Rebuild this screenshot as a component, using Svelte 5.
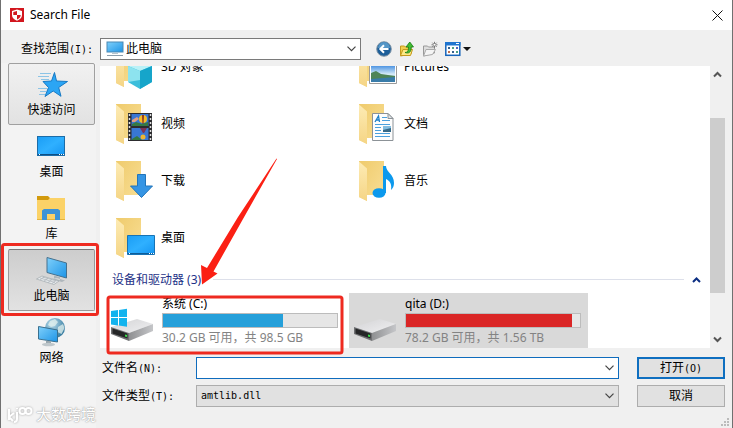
<script>
let fileName = "";
let lookIn = "此电脑";
let fileType = "amtlib.dll";
let active = "pc";

const places = [
    { id: "quick", label: "快速访问" },
    { id: "desktop", label: "桌面" },
    { id: "library", label: "库" },
    { id: "pc", label: "此电脑" },
    { id: "network", label: "网络" }
];

const folders = [
    { id: "objects", label: "3D 对象" },
    { id: "pictures", label: "Pictures" },
    { id: "videos", label: "视频" },
    { id: "documents", label: "文档" },
    { id: "downloads", label: "下载" },
    { id: "music", label: "音乐" },
    { id: "desktop", label: "桌面" }
];

const drives = [
    { label: "系统 (C:)", info: "30.2 GB 可用，共 98.5 GB", used: 69, system: true },
    { label: "qita (D:)", info: "78.2 GB 可用，共 1.56 TB", used: 95.5, full: true, selected: true }
];
</script>

<div class="dialog">
    <svg class="defs" width="0" height="0" aria-hidden="true">
        <defs>
            <linearGradient id="screen" x1="0" y1="0" x2="1" y2="1">
                <stop offset="0" stop-color="#1a9df5" /><stop offset=".5" stop-color="#2fb0ff" /><stop offset="1" stop-color="#1595f2" />
            </linearGradient>
            <linearGradient id="glass" x1="0" y1="0" x2="1" y2="1">
                <stop offset="0" stop-color="#7fd0fb" /><stop offset="1" stop-color="#1d94e6" />
            </linearGradient>
            <linearGradient id="back" x1="0" y1="0" x2="1" y2="1">
                <stop offset="0" stop-color="#efcb6c" /><stop offset="1" stop-color="#f9df97" />
            </linearGradient>
            <linearGradient id="flap" x1="0" y1="0" x2="0" y2="1">
                <stop offset="0" stop-color="#fdebb4" /><stop offset="1" stop-color="#f5d585" />
            </linearGradient>
            <linearGradient id="metal" x1="0" y1="0" x2="1" y2="1">
                <stop offset="0" stop-color="#d3d3d5" /><stop offset="1" stop-color="#f0f0f2" />
            </linearGradient>
            <linearGradient id="side" x1="0" y1="0" x2="1" y2="0">
                <stop offset="0" stop-color="#8f9092" /><stop offset="1" stop-color="#c5c6c9" />
            </linearGradient>
            <linearGradient id="sky" x1="0" y1="0" x2="0" y2="1">
                <stop offset="0" stop-color="#3f8be0" /><stop offset=".55" stop-color="#d8ecf8" /><stop offset="1" stop-color="#5b9fc4" />
            </linearGradient>
            <radialGradient id="globe" cx=".35" cy=".3" r=".8">
                <stop offset="0" stop-color="#b8dcec" /><stop offset="1" stop-color="#2a7399" />
            </radialGradient>
        </defs>
    </svg>

    <header class="titlebar">
        <svg width="14" height="14" viewBox="0 0 14 14">
            <rect width="14" height="14" fill="#d2161e" />
            <path d="M7 1.6 12 3v4c0 2.8-2.2 4.7-5 5.8C4.200 11.700 2 9.800 2 7V3Z" fill="#fff" />
            <path d="M7 3v4H3.300V4Z M7 7h3.700c0 2-1.600 3.500-3.700 4.500Z" fill="#d2161e" />
        </svg>
        <h1>Search File</h1>
        <button class="close" aria-label="关闭">
            <svg width="11" height="11" viewBox="0 0 11 11"><path d="M.5.5l10 10M10.500.5l-10 10" stroke="#111" fill="none" /></svg>
        </button>
    </header>

    <div class="lookup">
        <label for="look-in">查找范围<span class="mono">(I):</span></label>
        <div class="combo location">
            <svg width="18" height="16" viewBox="0 0 18 16">
                <rect x="1" y="1" width="16" height="10" fill="url(#glass)" stroke="#4a89b5" />
                <path d="M6 12h6v1H6z" fill="#b8c4cc" />
                <path d="M1 14.500h16" stroke="#8b9dab" />
            </svg>
            <select id="look-in" bind:value={lookIn}><option>此电脑</option></select>
            <svg class="chevron" width="9" height="6" viewBox="0 0 9 6"><path d="M.5.7l4 4 4-4" fill="none" stroke="#444" stroke-width="1.200" /></svg>
        </div>
        <div class="tools">
            <button aria-label="后退">
                <svg width="16" height="16" viewBox="0 0 16 16">
                    <circle cx="8" cy="8" r="7.300" fill="#1c5e99" stroke="#8397a8" />
                    <path d="M2 7a6 6 0 0 1 12 0Z" fill="#5596c6" />
                    <path d="M12.500 8H4.500M8 4.300 4.300 8 8 11.700" fill="none" stroke="#fff" stroke-width="2" />
                </svg>
            </button>
            <button aria-label="向上一级">
                <svg width="16" height="16" viewBox="0 0 16 16">
                    <path d="M1.500 5h4l1 1h5.500v7l-10.500 2Z" fill="#f2ce4e" stroke="#c59a1d" />
                    <path d="M4 8.500h9.500l-2 6h-10Z" fill="#fde986" stroke="#c59a1d" />
                    <path d="M6 11.500c3 0 3.500-2 3.500-5.500H7L10.800 1 14.500 6h-2.300c0 5-2 7-6.200 5.500Z" fill="#42bd32" stroke="#197b16" stroke-width=".8" />
                </svg>
            </button>
            <button aria-label="新建文件夹">
                <svg width="16" height="16" viewBox="0 0 16 16">
                    <path d="M1.500 5h4l1 1h6v6l-11 3Z" fill="#ddd" stroke="#999" />
                    <path d="M4 8.500h9.500l-3 5-9 1.500Z" fill="#f4f4f4" stroke="#aaa" />
                    <path d="M12.500.8v6M9.500 3.800h6M10.400 1.700l4.200 4.200M14.600 1.700l-4.200 4.200" stroke="#777" />
                    <circle cx="12.500" cy="3.800" r="1" fill="#fff" />
                </svg>
            </button>
            <button class="view" aria-label="查看">
                <svg width="26" height="16" viewBox="0 0 26 16">
                    <rect x=".8" y="1.800" width="14" height="12.500" fill="#fff" stroke="#1765bb" stroke-width="1.500" />
                    <path d="M0 1h15.500v3.500H0z" fill="#1f74cf" />
                    <path d="M11 2.500h3" stroke="#fff" />
                    <path d="M3 7h2M7 11h2" stroke="#35618e" stroke-width="2" />
                    <path d="M7 7h2M11 11h2" stroke="#4ea082" stroke-width="2" />
                    <path d="M11 7h2" stroke="#5164c0" stroke-width="2" />
                    <path d="M3 11h2" stroke="#c1704e" stroke-width="2" />
                    <path d="M18 6h8l-4 4Z" fill="#111" />
                </svg>
            </button>
        </div>
    </div>

    <div class="body">
        <nav class="places">
            {#each places as place}
                <button class="place" class:hover={place.id === "quick"} class:active={place.id === active} on:click={() => (active = place.id)}>
                    <svg width="32" height="32" viewBox="0 0 32 32">
                        {#if place.id === "quick"}
                            <path d="M18.500 2.500 20.500 11l11 .5-8.800 6 2.300 8.800-7.800-5.300-8.200 5.500 3.500-9L7 11.500l8.500-.5Z" fill="#2ba5f4" stroke="#1679c4" />
                            <path d="M4 3.500h11M2 6.500h11M5 9.500h8M2 18.500h9M4 21.500h6M3 24.500h6" stroke="#8cc4e6" />
                        {:else if place.id === "desktop"}
                            <rect x="1.500" y="4.500" width="27" height="19" fill="url(#screen)" stroke="#1b6ca8" />
                            <path d="M2 22.500h26" stroke="#0d4f85" /><path d="M3 22.500h1M23 22.500h1M25 22.500h1M27 22.500h1" stroke="#fff" />
                        {:else if place.id === "library"}
                            <path d="M1 2h11l2 2-1 3H1Z" fill="#d29a0d" />
                            <path d="M1 6h11l2-2h15v22H1Z" fill="#fbd267" />
                            <path d="M6 26V16.500l2-1.500h14l2 1.500V26h-5v-6h-8v6Z" fill="#3d93d6" />
                            <path d="M1 25.500h5M11 25.500h8M24 25.500h5" stroke="#e5b43c" />
                        {:else if place.id === "pc"}
                            <path d="M11 1.500 30.500 7v15L11 16.500Z" fill="url(#glass)" stroke="#45718e" />
                            <path d="M18 19.500l6 1.700v3l-6-1.500ZM15 23l11 3 3-1.500-8-2.500Z" fill="#aeb6bb" />
                            <path d="M6 20 23 25l-5 3.500L.5 23Z" fill="#e8ebed" stroke="#a2aaaf" stroke-width=".7" />
                            <path d="M4 22l15 4.500M6.500 21l14 4M8 21l-4 3M12 22.500 8 25M16 23.500l-4 3M20 24.500l-4 3" stroke="#aab2b7" stroke-width=".7" />
                        {:else}
                            <circle cx="19" cy="10" r="10" fill="url(#globe)" />
                            <path d="M14 3l5-2 3 3-3 4-4 1-3-2ZM22 9l5-3 1.500 4-3 6-4-2Z" fill="#e4f1ee" opacity=".75" />
                            <path d="M2.500 8.500 21.500 12v12L2.500 21Z" fill="url(#glass)" stroke="#39708f" />
                            <path d="M10 22.500l5 .8V26h-5Z" fill="#97a5ad" />
                            <ellipse cx="12.500" cy="26.500" rx="6.500" ry="1.800" fill="#bfc7cb" />
                        {/if}
                    </svg>
                    <span>{place.label}</span>
                </button>
            {/each}
        </nav>

        <main>
            <div class="browser">
                <div class="list">
                    <ul class="folders">
                        {#each folders as folder}
                            <li>
                                <svg width="48" height="48" viewBox="0 0 48 48">
                                    <path d="M7 4h25v34H15v6L7 40Z" fill="url(#back)" />
                                    <path d="M7 4.500l8 7V44l-8-4Z" fill="url(#flap)" />
                                    {#if folder.id === "objects"}
                                        <path d="M31 18 43 23v16l-12 7-12-7V23Z" fill="#3cbedb" />
                                        <path d="M31 18 43 23l-12 5-12-5Z" fill="#b9f1f7" />
                                        <path d="M31 28 43 23v16l-12 7Z" fill="#16a5ca" />
                                        <path d="M19 23l12 5v9l-12 2Z" fill="#8de3ef" />
                                    {:else if folder.id === "pictures"}
                                        <path d="M17.500 20.500h27v20h-27z" fill="#fff" stroke="#9a9a9a" />
                                        <path d="M19 22h24v17H19z" fill="url(#sky)" />
                                        <path d="M19 30l5-2 5 3 14 2v2l-24 2Z" fill="#4e8457" />
                                        <path d="M19 36l24-2v5H19Z" fill="#397ca9" />
                                    {:else if folder.id === "videos"}
                                        <path d="M19 13h24v28H19z" fill="#2c2c2e" />
                                        <path d="M22.500 14h17v12h-17zM22.500 28h17v12h-17z" fill="#3877d4" />
                                        <path d="M20.500 14v27M41.500 14v27" stroke="#dedede" stroke-width="1.500" stroke-dasharray="2 2" />
                                        <circle cx="34" cy="19" r="4" fill="#f3bd29" /><path d="M33 15h2l-.5 10h-1Z" fill="#913520" />
                                        <path d="M23 24l4-2 6 2 6-2v4H23ZM23 39l5-3 5 4H23Z" fill="#347943" />
                                        <path d="M31 28h7l-3 5h-1Z" fill="#7c3355" /><circle cx="34" cy="37" r="2.500" fill="#eeb630" />
                                        <path d="M23 20l5-3 2 2-4 3h-3Z" fill="#dfa084" />
                                    {:else if folder.id === "documents"}
                                        <path d="M20.500 13.500H36l5 5v22H20.500Z" fill="#fdfdfd" stroke="#8c9297" />
                                        <path d="M36 13.500v5h5Z" fill="#dfe3e6" stroke="#8c9297" />
                                        <path d="M23 22l3.500-6 1 6M24.500 20h3" fill="none" stroke="#1c7fc9" stroke-width="1.300" />
                                        <path d="M30 17.500h5M30 20.500h8M23 24.500h15M23 27.500h6M23 30.500h6M23 33.500h15M23 36.500h15" stroke="#4aa0de" />
                                        <path d="M31 26h8v6h-8z" fill="#376987" /><path d="M31 26h8v2l-8 2Z" fill="#83bde0" />
                                    {:else if folder.id === "downloads"}
                                        <path d="M28.500 17.500h8V29h7L32.500 40.500 21.500 29h7Z" fill="#3595e4" stroke="#2275ba" />
                                    {:else if folder.id === "music"}
                                        <ellipse cx="27" cy="36" rx="6.500" ry="4.800" fill="#0c99ed" />
                                        <path d="M31 9h3c0 6 8 8 8 17 0 3-1 5-3 7 1-6-1-9-5-11v14h-3Z" fill="#0c99ed" />
                                    {:else}
                                        <path d="M18.500 21.500h27v19h-27z" fill="url(#screen)" stroke="#1773b5" />
                                        <path d="M19 39.500h26" stroke="#0d5c98" /><path d="M20 39.500h1M40 39.500h1M42 39.500h1M44 39.500h1" stroke="#fff" />
                                    {/if}
                                </svg>
                                <span>{folder.label}</span>
                            </li>
                        {/each}
                    </ul>

                    <div class="group">
                        <h2>设备和驱动器 (3)</h2>
                        <hr />
                        <button aria-label="折叠">
                            <svg width="9" height="6" viewBox="0 0 9 6"><path d="M1 5l3.500-3.500L8 5" fill="none" stroke="#0b2e82" stroke-width="2" /></svg>
                        </button>
                    </div>

                    <ul class="drives">
                        {#each drives as drive}
                            <li class:selected={drive.selected}>
                                <svg width="48" height="48" viewBox="0 0 48 48">
                                    <path d="M2 31 28 23l16 5-24 9Z" fill="url(#metal)" />
                                    <path d="M20 37l24-9v7l-24 10Z" fill="url(#side)" />
                                    <path d="M2 31l18 6v8L2 38Z" fill="#6f7072" />
                                    <path d="M3.500 32.500l15 5v5l-15-5Z" fill="#252627" />
                                    <path d="M16 38.500l2 .6v2l-2-.6Z" fill="#39e24c" />
                                    {#if drive.system}
                                        <path d="M2 15l7-1v7H2ZM10 13.900l8-1.100V21h-8ZM2 22h7v7.500l-7-1ZM10 22h8v8.800l-8-1.200Z" fill="#12b3ee" />
                                    {/if}
                                </svg>
                                <div class="drive">
                                    <span>{drive.label}</span>
                                    <div class="bar"><div class="fill" class:full={drive.full} style="width:{drive.used}%"></div></div>
                                    <span class="info">{drive.info}</span>
                                </div>
                            </li>
                        {/each}
                    </ul>
                </div>
                <div class="scrollbar">
                    <svg width="9" height="7" viewBox="0 0 9 7"><path d="M1 5.500 4.500 2 8 5.500" fill="none" stroke="#555" stroke-width="2" /></svg>
                    <div class="track"><div class="thumb"></div></div>
                    <svg width="9" height="7" viewBox="0 0 9 7"><path d="M1 1.500 4.500 5 8 1.500" fill="none" stroke="#555" stroke-width="2" /></svg>
                </div>
            </div>

            <form class="fields" on:submit|preventDefault>
                <label for="file-name">文件名<span class="mono">(N):</span></label>
                <div class="combo name">
                    <input id="file-name" type="text" bind:value={fileName} />
                    <svg class="chevron" width="9" height="6" viewBox="0 0 9 6"><path d="M.5.7l4 4 4-4" fill="none" stroke="#444" stroke-width="1.200" /></svg>
                </div>
                <button class="action primary">打开<span class="mono">(O)</span></button>

                <label for="file-type">文件类型<span class="mono">(T):</span></label>
                <div class="combo type">
                    <select id="file-type" class="mono" bind:value={fileType}><option>amtlib.dll</option></select>
                    <svg class="chevron" width="9" height="6" viewBox="0 0 9 6"><path d="M.5.7l4 4 4-4" fill="none" stroke="#444" stroke-width="1.200" /></svg>
                </div>
                <button type="button" class="action">取消</button>
            </form>
        </main>
    </div>

    <!-- red marks drawn over the dialog -->
    <svg class="marks" width="360" height="360" viewBox="0 0 360 360" aria-hidden="true">
        <rect x="1.500" y="244.500" width="95" height="70" rx="2" />
        <rect x="107" y="297" width="234" height="56" rx="2" />
        <path d="M275.500 158.500 237 217 206 268l-6-3 1 19.500 15.500-11-4-2L242 219l34-60Z" />
    </svg>

    <div class="watermark">
        <svg width="26" height="17" viewBox="0 0 26 17" fill="none">
            <path d="M2 3v11M7 7l-5 4 4 4M10 6v7q0 3-3 3M10 2v1" />
            <circle cx="15.500" cy="5" r="3" /><circle cx="21.500" cy="5" r="3" />
        </svg>
        <span>大数跨境</span>
    </div>

    <svg class="grip" width="9" height="9" viewBox="0 0 9 9" aria-hidden="true">
        <path d="M6 0h2v2H6zM3 3h2v2H3zM6 3h2v2H6zM0 6h2v2H0zM3 6h2v2H3zM6 6h2v2H6z" fill="#bbb" />
    </svg>
</div>

<style>
    :global(body) {
        margin: 0;
    }
    .dialog {
        position: relative;
        display: flex;
        flex-direction: column;
        box-sizing: border-box;
        height: 100vh;
        overflow: hidden;
        border-left: 1px solid #707070;
        border-right: 1px solid #707070;
        background: #f0f0f0;
        color: #000;
        font: 12px/16px "Noto Sans", "Noto Sans CJK SC", sans-serif;
    }
    .dialog * {
        box-sizing: border-box;
    }
    .defs {
        position: absolute;
    }
    svg {
        display: block;
        flex: none;
    }
    button, input, select {
        margin: 0;
        padding: 0;
        border: 0;
        border-radius: 0;
        outline: 0;
        background: none;
        color: inherit;
        font: inherit;
    }
    h1, h2, ul {
        margin: 0;
        padding: 0;
        font-size: 12px;
        font-weight: 400;
        list-style: none;
    }
    .mono {
        font-family: "DejaVu Sans Mono", monospace;
        font-size: 10px;
    }

    .titlebar {
        display: flex;
        flex: none;
        align-items: center;
        gap: 6px;
        height: 30px;
        padding: 0 9px;
        background: #fff;
    }
    .close {
        margin-left: auto;
    }

    .lookup {
        display: flex;
        flex: none;
        align-items: center;
        height: 33px;
        padding: 5px 8px 0 20px;
    }
    .lookup label {
        width: 79px;
    }
    .combo {
        display: flex;
        align-items: center;
        height: 22px;
        padding-right: 4px;
        border: 1px solid #7a7a7a;
        background: #fff;
    }
    .combo select, .combo input {
        flex: 1;
        min-width: 0;
        height: 20px;
        appearance: none;
    }
    .location {
        width: 261px;
        padding-left: 5px;
        gap: 2px;
    }
    .tools {
        display: flex;
        gap: 7px;
        margin-left: 15px;
    }

    .body {
        display: flex;
        flex: 1;
        min-height: 0;
    }
    .places {
        flex: none;
        width: 95px;
        margin-right: 4px;
        padding-left: 7px;
        background: #f3f3f3;
    }
    .place {
        display: flex;
        flex-direction: column;
        align-items: center;
        width: 87px;
        height: 62px;
        padding-top: 6px;
        border: 1px solid transparent;
        border-radius: 2px;
        line-height: 16px;
    }
    .place.hover {
        border-color: #a0a0a0;
        background: linear-gradient(#f1f1f1, #e2e2e2);
    }
    .place.active {
        border-color: #777 #999 #999;
        background: linear-gradient(#cdcdcd, #e2e2e2);
    }

    main {
        display: flex;
        flex: 1;
        flex-direction: column;
        min-width: 0;
        padding: 3px 7px 21px 0;
    }
    .browser {
        display: flex;
        flex: 1;
        min-height: 0;
    }
    .list {
        flex: 1;
        min-width: 0;
        overflow: hidden;
        background: #fff;
    }
    /* the list is scrolled down by half a row */
    .folders {
        margin-top: -28px;
    }
    .folders, .drives {
        display: grid;
        grid-template-columns: 239px 239px;
        gap: 0 4px;
        padding-left: 6px;
    }
    .folders li, .drives li {
        display: flex;
        gap: 4px;
        padding-left: 3px;
    }
    .folders li {
        height: 57px;
        padding-top: 5px;
    }
    .folders span {
        padding-top: 16px;
    }
    .group {
        display: flex;
        align-items: center;
        height: 27px;
        padding: 0 9px 0 12px;
        color: #1e3287;
    }
    .group hr {
        flex: 1;
        margin: 0 8px 0 12px;
        border: 0;
        border-top: 1px solid #dde0ea;
    }
    .drives li {
        gap: 5px;
        height: 55px;
        padding-top: 3px;
    }
    .drives .selected {
        background: #d9d9d9;
    }
    .drive {
        display: flex;
        flex-direction: column;
        gap: 1px;
        width: 176px;
        white-space: nowrap;
    }
    .bar {
        height: 15px;
        border: 1px solid #bcbcbc;
        background: #e6e6e6;
    }
    .fill {
        height: 13px;
        background: #26a0da;
    }
    .fill.full {
        background: #da2626;
    }
    .info {
        color: #838383;
        line-height: 18px;
    }
    .scrollbar {
        display: flex;
        flex: none;
        flex-direction: column;
        align-items: center;
        width: 15px;
        padding: 5px 0;
    }
    .track {
        flex: 1;
        width: 100%;
        padding: 40px 0 43px;
    }
    .thumb {
        height: 100%;
        background: #cdcdcd;
    }

    .fields {
        display: grid;
        grid-template-columns: 96px 1fr 88px;
        flex: none;
        align-items: center;
        row-gap: 6px;
        margin-top: 9px;
    }
    .fields label {
        padding-left: 2px;
    }
    .fields .combo {
        margin-right: 18px;
    }
    .name {
        border-color: #0f6cbd;
    }
    .name input {
        padding: 0 4px;
    }
    .type {
        padding-left: 4px;
        border-color: #adadad;
        background: #e1e1e1;
    }
    .action {
        height: 22px;
        border: 1px solid #adadad;
        background: #e1e1e1;
    }
    .primary {
        border: 2px solid #0f6fc0;
    }

    .marks {
        position: absolute;
        top: 0;
        left: 0;
        fill: #fb2014;
        pointer-events: none;
    }
    .marks rect {
        fill: none;
        stroke: #ee2a20;
        stroke-width: 3;
    }
    .watermark {
        position: absolute;
        bottom: 5px;
        left: 6px;
        display: flex;
        align-items: center;
        gap: 3px;
        color: #fff;
        font-size: 15px;
        line-height: 18px;
        text-shadow: 0 0 1px #999, 0 0 2px #aaa;
        pointer-events: none;
    }
    .watermark svg {
        stroke: #fff;
        stroke-width: 2;
        filter: drop-shadow(0 0 1px #aaa);
    }
    .grip {
        position: absolute;
        right: 2px;
        bottom: 1px;
    }
</style>
